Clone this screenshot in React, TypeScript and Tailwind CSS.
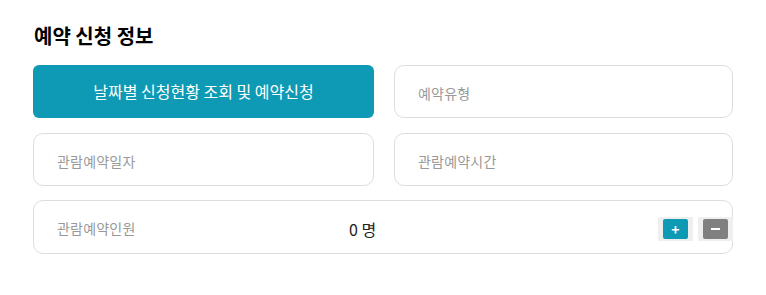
import { useState } from 'react'

const font = { fontFamily: '"Noto Sans CJK KR", "Noto Sans", sans-serif' }

function Field({ label }: { label: string }) {
  return (
    <div className="flex h-[53px] items-center rounded-[10px] border border-[#dddddd] bg-white pl-[23px] pt-[4px] text-[14px] tracking-[0.2px] text-[#999999]">
      {label}
    </div>
  )
}

export default function App() {
  const [count, setCount] = useState(0)
  return (
    <div className="min-h-[295px] w-[766px] bg-white pl-[33px] pt-[22px]" style={font}>
      <h2 className="mb-[15px] pl-px text-[20px] leading-[28px] font-bold text-black">예약 신청 정보</h2>
      <div className="grid w-[700px] grid-cols-[341px_339px] gap-x-[20px] gap-y-[15px]">
        <button className="flex h-[53px] items-center justify-center rounded-[6px] bg-[#0e9ab4] pb-px text-[16px] text-white">
          날짜별 신청현황 조회 및 예약신청
        </button>
        <Field label="예약유형" />
        <Field label="관람예약일자" />
        <Field label="관람예약시간" />
        <div className="col-span-2 -mt-px flex h-[54px] items-center rounded-[10px] border border-[#dddddd] bg-white pt-[3px]">
          <span className="w-[315px] pl-[23px] text-[14px] tracking-[0.2px] text-[#999999]">관람예약인원</span>
          <span className="text-[16px] text-[#222222]">{count} 명</span>
          <div className="ml-auto flex gap-[5px] self-center">
            <button
              onClick={() => setCount(count + 1)}
              className="flex h-[24px] w-[35px] items-center justify-center bg-[#efefef]"
              aria-label="증가"
            >
              <span className="flex h-[20px] w-[25px] items-center justify-center rounded-[2px] bg-[#0e9ab4] text-[14px] leading-none font-bold text-white">
                +
              </span>
            </button>
            <button
              onClick={() => setCount(Math.max(0, count - 1))}
              className="-mr-px flex h-[24px] w-[35px] items-center justify-center bg-[#efefef]"
              aria-label="감소"
            >
              <span className="flex h-[20px] w-[25px] items-center justify-center rounded-[2px] bg-[#808080]">
                <span className="h-[2px] w-[9px] bg-white" />
              </span>
            </button>
          </div>
        </div>
      </div>
    </div>
  )
}
